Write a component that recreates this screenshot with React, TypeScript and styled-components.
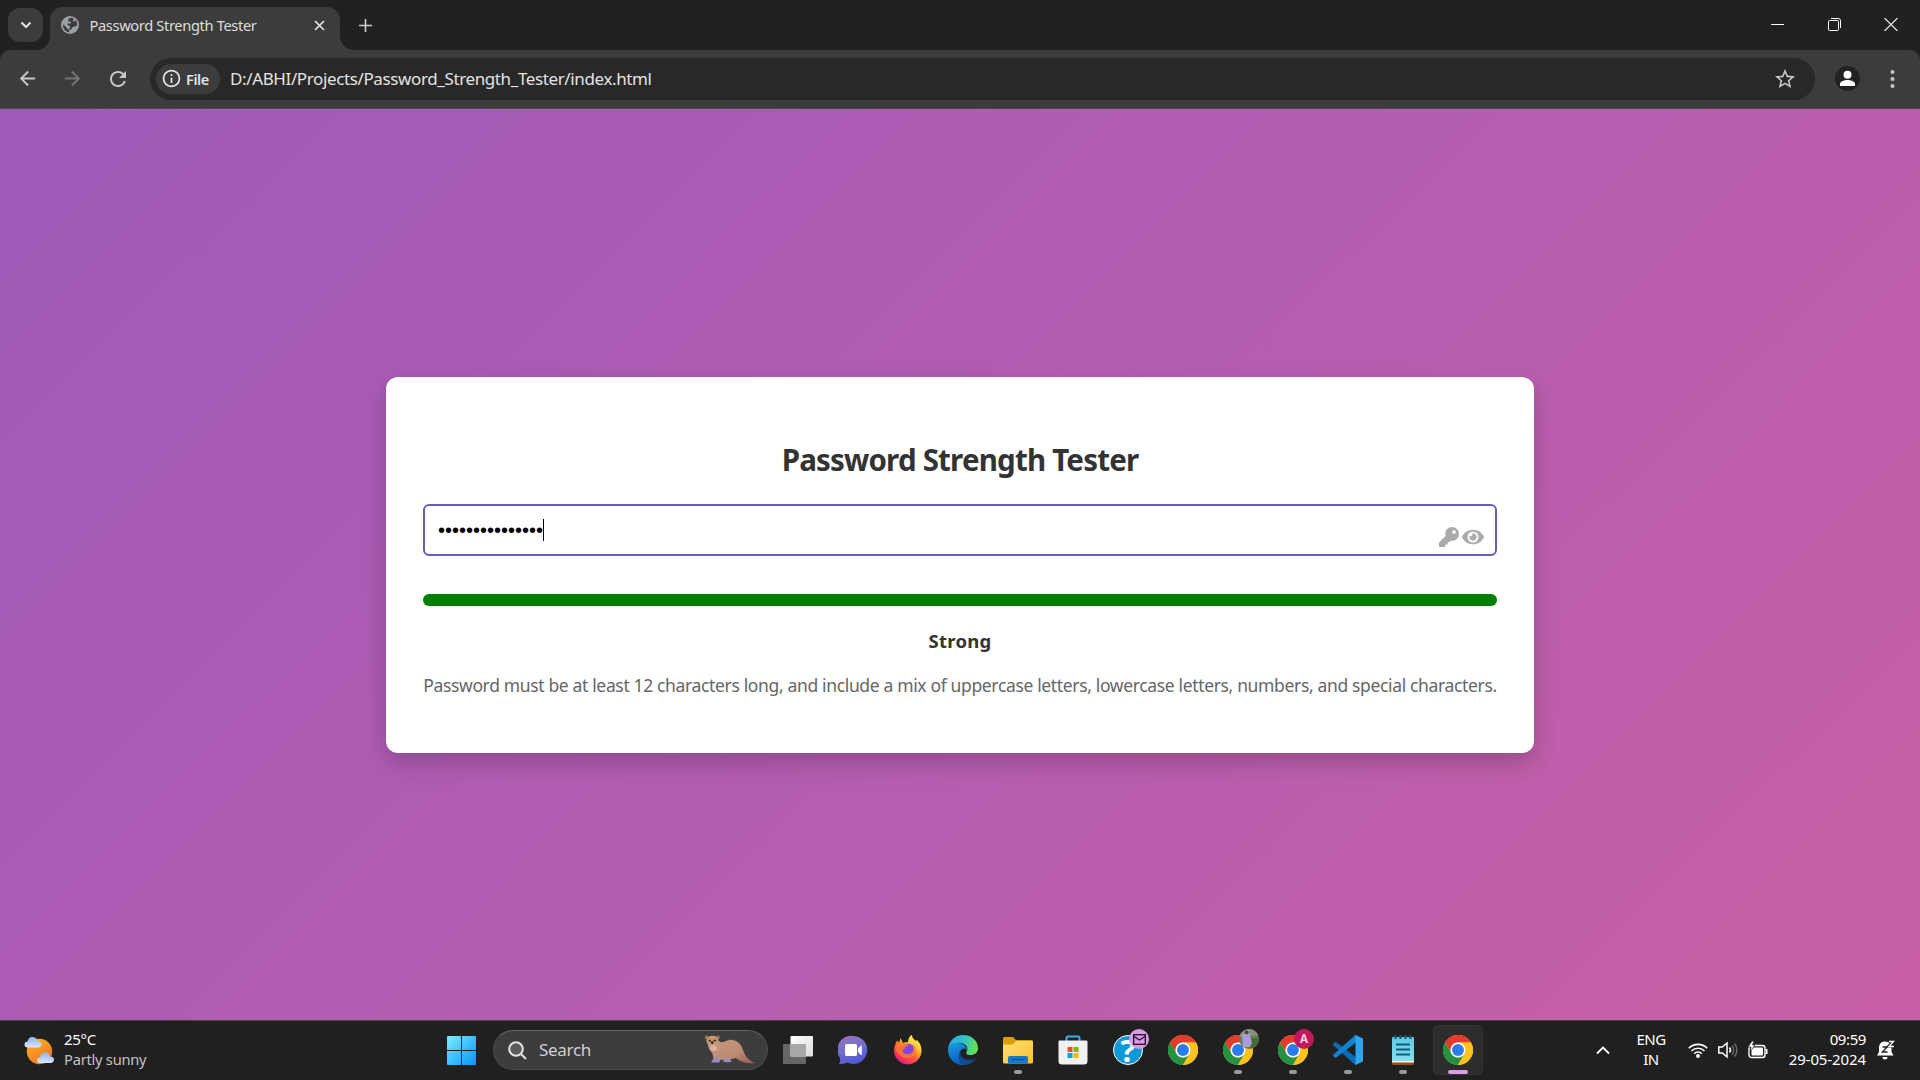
import React from "react";
import styled, { createGlobalStyle, css } from "styled-components";
import { FaKey, FaEye } from "react-icons/fa";
import { MdArrowBack, MdArrowForward, MdRefresh, MdStarBorder, MdInfoOutline } from "react-icons/md";

const Global = createGlobalStyle`
  * { box-sizing: border-box; }
  html, body { margin: 0; padding: 0; overflow: hidden; }
  body { font-family: "Noto Sans", "Open Sans", sans-serif; }
  svg { display: block; flex: none; }
`;

const Screen = styled.div`
  width: 1920px;
  height: 1080px;
  display: flex;
  flex-direction: column;
  overflow: hidden;
  background: #202221;
`;

const Label = styled.span<{ size: number; track?: number; weight?: number; color?: string; line?: number }>`
  white-space: nowrap;
  font-size: ${(p) => p.size}px;
  letter-spacing: ${(p) => p.track ?? 0}px;
  font-weight: ${(p) => p.weight ?? 400};
  color: ${(p) => p.color ?? "#ffffff"};
  line-height: ${(p) => p.line ?? 20}px;
`;

/* ---------- browser ---------- */

const TabStrip = styled.div`
  height: 50px;
  flex: none;
  display: flex;
  align-items: flex-start;
  padding: 7px 0 0 8px;
`;

const TabSearch = styled.div`
  width: 35px;
  height: 34px;
  margin: 1px 7px 0 0;
  border-radius: 12px;
  background: #3c3c3c;
  display: grid;
  place-items: center;
`;

const Tab = styled.div`
  position: relative;
  width: 290px;
  height: 43px;
  padding: 0 15px 7px 11px;
  border-radius: 13px 13px 0 0;
  background: #3c3c3c;
  display: flex;
  align-items: center;
  &::before, &::after {
    content: "";
    position: absolute;
    bottom: 0;
    width: 13px;
    height: 13px;
  }
  &::before { left: -13px; background: radial-gradient(circle at 0 0, transparent 12.5px, #3c3c3c 13px); }
  &::after { right: -13px; background: radial-gradient(circle at 100% 0, transparent 12.5px, #3c3c3c 13px); }
`;

const TabTitle = styled.div`
  flex: 1;
  padding-left: 10.5px;
  display: flex;
`;

const NewTab = styled.div`
  height: 36px;
  margin-left: 19px;
  display: flex;
  align-items: center;
`;

const WindowButtons = styled.div`
  height: 35px;
  margin-left: auto;
  padding-right: 22px;
  display: flex;
  align-items: center;
  gap: 43.5px;
`;

const Toolbar = styled.div`
  height: 59px;
  flex: none;
  display: flex;
  align-items: center;
  padding: 0 22px 1px 16px;
  border-radius: 10px 10px 0 0;
  background: #3c3c3c;
  border-bottom: 1px solid #4a4a4a;
  color: #c7c7c7;
`;

const NavButtons = styled.div`
  display: flex;
  align-items: center;
  width: 134px;
  gap: 22px;
`;

const Omnibox = styled.div`
  width: 1665px;
  height: 42px;
  border-radius: 21px;
  background: #282828;
  padding: 0 18px 0 6px;
  display: flex;
  align-items: center;
`;

const Chip = styled.div`
  width: 64px;
  height: 30px;
  border-radius: 15px;
  background: #3c3c3c;
  color: #e3e3e3;
  padding-left: 5px;
  display: flex;
  align-items: center;
  gap: 4px;
  margin-right: 10px;
`;

const Url = styled.div`
  flex: 1;
  display: flex;
`;

const Avatar = styled.div`
  width: 25px;
  height: 25px;
  margin: 0 auto 0 20px;
`;

/* ---------- web page ---------- */

const Page = styled.main`
  height: 911px;
  flex: none;
  display: flex;
  justify-content: center;
  align-items: center;
  background: linear-gradient(135deg, #9e5ab8, #b55db1 52%, #c960a6);
`;

const Card = styled.section`
  width: 1148px;
  height: 376px;
  margin-top: 1px;
  padding: 63px 37px 0;
  border-radius: 12px;
  background: #ffffff;
  box-shadow: 0 10px 25px rgba(0, 0, 0, 0.2);
  display: flex;
  flex-direction: column;
  align-items: center;
`;

const Field = styled.div`
  width: 100%;
  height: 52px;
  margin: 24px 0 38px;
  padding: 0 11px 0 13px;
  border: 2px solid #6c5cb8;
  border-radius: 6px;
  display: flex;
  align-items: center;
`;

const Dots = styled.span`
  font-family: "Liberation Sans", Arial, sans-serif;
  font-size: 20px;
  line-height: 22px;
  margin-top: -1px;
  color: #000;
`;

const Caret = styled.i`
  width: 1px;
  height: 22px;
  background: #000;
`;

const FieldIcons = styled.div`
  margin: 13px 0 0 auto;
  display: flex;
  align-items: center;
  gap: 3px;
  color: #aaaaaa;
`;

const Meter = styled.div`
  width: 100%;
  height: 12px;
  flex: none;
  border-radius: 6px;
  background: #008000;
`;

const Verdict = styled.div`
  height: 28px;
  margin: 21px 0 17px;
  display: flex;
`;

/* ---------- taskbar ---------- */

const Taskbar = styled.footer`
  height: 60px;
  flex: none;
  display: flex;
  align-items: center;
  padding-bottom: 1px;
  background: #202020;
  border-top: 1px solid #474747;
`;

const Weather = styled.div`
  width: 433px;
  padding-left: 24px;
  display: flex;
  align-items: center;
  gap: 9px;
`;

const Lines = styled.div<{ align?: string; width?: number }>`
  display: flex;
  flex-direction: column;
  align-items: ${(p) => p.align ?? "flex-start"};
  ${(p) => p.width && css`width: ${p.width}px;`}
  padding-bottom: 2px;
`;

const SearchBox = styled.div`
  width: 275px;
  height: 40px;
  border-radius: 20px;
  margin: 0 2.5px 0 4px;
  padding: 0 11px 0 14px;
  background: #3d3d3d;
  border: 1px solid #4b4b4b;
  border-top-color: #646464;
  display: flex;
  align-items: center;
`;

const SearchText = styled.div`
  flex: 1;
  display: flex;
  padding-left: 12px;
`;

const Slot = styled.div<{ wide?: number; active?: boolean }>`
  position: relative;
  width: ${(p) => p.wide ?? 55}px;
  height: 50px;
  display: grid;
  place-items: center;
  ${(p) => p.active && css`
    width: 50px;
    margin: 0 2.5px;
    background: #2d2d2d;
    box-shadow: inset 0 0 0 1px #343434;
    border-radius: 6px;
  `}
`;

const Marker = styled.i<{ active?: boolean }>`
  position: absolute;
  left: 50%;
  bottom: 1px;
  width: ${(p) => (p.active ? 20 : 8)}px;
  height: 4px;
  transform: translateX(-50%);
  border-radius: 2px;
  background: ${(p) => (p.active ? "#dc9be4" : "#9a9a9a")};
`;

const Badge = styled.span<{ bg: string }>`
  position: absolute;
  left: 28.5px;
  top: 4px;
  width: 20px;
  height: 20px;
  border-radius: 50%;
  overflow: hidden;
  background: ${(p) => p.bg};
  display: grid;
  place-items: center;
`;

const Tray = styled.div`
  margin-left: auto;
  padding-right: 25px;
  display: flex;
  align-items: center;
`;

const Gap = styled.span<{ w: number }>`
  width: ${(p) => p.w}px;
`;

const ChromeLogo = () => (
  <svg width="30" height="30" viewBox="0 0 48 48">
    <circle cx="24" cy="24" r="24" fill="#fcc31e" />
    <path d="M3.2 12A24 24 0 0 1 44.8 12H24a12 12 0 0 0-10.4 18Z" fill="#e33b2e" />
    <path d="M3.2 12A24 24 0 0 0 24 48l10.4-18a12 12 0 0 1-20.8 0Z" fill="#229342" />
    <path d="M44.8 12A24 24 0 0 1 24 48l10.4-18A12 12 0 0 0 24 12Z" fill="#fcc31e" />
    <circle cx="24" cy="24" r="12" fill="#fff" />
    <circle cx="24" cy="24" r="9.5" fill="#2a7bee" />
  </svg>
);

const Ferret = () => (
  <svg width="52" height="30" viewBox="0 0 52 30">
    <defs>
      <linearGradient id="fur" x1="0" y1="0" x2="1" y2="1">
        <stop offset="0" stopColor="#c79a7a" /><stop offset=".6" stopColor="#bd8a76" /><stop offset="1" stopColor="#8d5a4c" />
      </linearGradient>
    </defs>
    <path d="M3.500 7C4 12 5 15 8 17.500c1 3 1.500 5 1.500 7L24 25l8-2c4 4 12 6 19 5-6-2-10-7-12-13C37 8 31 4 25 5c-5 1-7 4-10 1Z" fill="url(#fur)" />
    <circle cx="2.800" cy="2.600" r="2" fill="#9f7256" /><circle cx="13.800" cy="2.600" r="2" fill="#9f7256" />
    <ellipse cx="8.300" cy="5.600" rx="6" ry="4.800" fill="#c49a72" />
    <path d="M4.500 4.800h2.600v1.800H4.500ZM9.500 4.800h2.600v1.800H9.500Z" fill="#4b3732" /><circle cx="8.200" cy="7.600" r="1.300" fill="#29191b" />
    <ellipse cx="9.500" cy="13" rx="3.600" ry="3" fill="#d9b1a3" />
    <path d="M9.500 24c3-2 5-2 7-1l-1 4.500H7.500c0-1 0-2 2-3.500ZM20 24l5-1 3 3.500c-2 1-7 1-9 0Z" fill="#9b8cc0" />
  </svg>
);

const PartlySunny = () => (
  <svg width="31" height="29" viewBox="0 0 31 29">
    <defs>
      <linearGradient id="sun" x1="0" y1="0" x2=".6" y2="1"><stop stopColor="#f7ba2c" /><stop offset="1" stopColor="#f2741c" /></linearGradient>
      <linearGradient id="cl" x1="0" y1="0" x2="0" y2="1"><stop stopColor="#8fb2ee" /><stop offset="1" stopColor="#dbe7fc" /></linearGradient>
    </defs>
    <circle cx="15.500" cy="15.500" r="12.700" fill="url(#sun)" />
    <path d="M3.500 11.500a3 3 0 0 1 0-6C4.500 2 6 .5 9 1c3 .2 4 2 4.500 4 2 0 4 1 4 3.200s-1.500 3.300-3.500 3.300Z" fill="url(#cl)" />
    <path d="M15.500 27a2.800 2.800 0 0 1 .5-5.600c.5-3 2.500-5 5.500-5 2.500 0 4 1.500 4.500 4 2.500 0 4 1 4 3s-1.500 3.600-3.500 3.600Z" fill="url(#cl)" />
  </svg>
);

const WindowsLogo = () => (
  <svg width="29" height="29" viewBox="0 0 29 29">
    <defs><linearGradient id="win" gradientUnits="userSpaceOnUse" x1="0" y1="0" x2="29" y2="29"><stop stopColor="#7ceffd" /><stop offset=".5" stopColor="#3dbffb" /><stop offset="1" stopColor="#0c93f8" /></linearGradient></defs>
    <path d="M1 0H14V14H0V1A1 1 0 0 1 1 0ZM15 0H28A1 1 0 0 1 29 1V14H15ZM0 15H14V29H1A1 1 0 0 1 0 28ZM15 15H29V28A1 1 0 0 1 28 29H15Z" fill="url(#win)" />
  </svg>
);

const TaskView = () => (
  <svg width="30" height="28" viewBox="0 0 30 28">
    <defs><linearGradient id="tv" x1="0" y1="0" x2="1" y2="1"><stop stopColor="#fff" /><stop offset="1" stopColor="#dcdcdc" /></linearGradient></defs>
    <rect x="0" y="8" width="23" height="20" rx="1" fill="#666" />
    <rect x="7.500" y="0" width="22.500" height="20.500" rx="1" fill="url(#tv)" />
    <path d="M7.500 8H23v12.500H8.500a1 1 0 0 1-1-1Z" fill="#a8a8a8" />
  </svg>
);

const ChatLogo = () => (
  <svg width="30" height="30" viewBox="0 0 30 30">
    <defs><linearGradient id="chat" x1=".2" y1="0" x2=".5" y2="1"><stop stopColor="#9b72b8" /><stop offset=".5" stopColor="#6f6fd0" /><stop offset="1" stopColor="#5257cf" /></linearGradient></defs>
    <path d="M15.500 1a14 14 0 1 1-6.500 26.500C6 29 3 29.300 1 29c1-1.500 1.500-4 1-6A14 14 0 0 1 15.500 1Z" fill="url(#chat)" />
    <rect x="7" y="9" width="12" height="12" rx="1.500" fill="#fff" /><path d="M20 13.500l3-3h.8v9.500H23l-3-3Z" fill="#fff" />
  </svg>
);

const FirefoxLogo = () => (
  <svg width="30" height="30" viewBox="0 0 30 30">
    <defs>
      <linearGradient id="ff" x1=".8" y1=".1" x2=".25" y2=".95"><stop stopColor="#fff44f" /><stop offset=".3" stopColor="#ffbd2f" /><stop offset=".6" stopColor="#ff5a36" /><stop offset="1" stopColor="#e8187f" /></linearGradient>
    </defs>
    <path d="M1 16C1 11 3 7 4.500 5.500L6 8l1.500-5L10 8c2-1 4-1 5-1 0-3 1.500-6 4-7 0 3 2 4 4 6l1-1c3 3 5 7 4.500 12A13.800 13.800 0 0 1 1 16Z" fill="url(#ff)" />
    <circle cx="15" cy="14.500" r="6" fill="#8144e2" />
    <path d="M2.500 11c3-3 7-3 10-1.500 1 0 3-.5 3.500 0-1 2-3 2-4 3-.5 1.500-1 2.500-3 3 1 3 4 4 7 3.500 4-1 6-5 4-9 5 3 4 10-2 12.500C10 25 2 19 2.500 11Z" fill="#ff7a2c" opacity=".8" />
  </svg>
);

const EdgeLogo = () => (
  <svg width="30" height="30" viewBox="0 0 30 30">
    <defs>
      <linearGradient id="e1" x1="0" y1=".3" x2="1" y2=".5"><stop stopColor="#26a8e8" /><stop offset=".5" stopColor="#2fc2c9" /><stop offset="1" stopColor="#69e04c" /></linearGradient>
      <linearGradient id="e2" x1="0" y1="0" x2=".3" y2="1"><stop stopColor="#1a9be4" /><stop offset="1" stopColor="#0b5fbd" /></linearGradient>
    </defs>
    <path d="M15 30C6 30 0 23 0 15c0-4 5-8 10-7 5 0 8 3 9 7-2-2-4-2-6 0-4 5-1 12 6 13-1 1-2 2-4 2Z" fill="url(#e2)" />
    <path d="M0 14C1 6 7 0 15 0c9 0 15 6 15 13 0 5-4 7-7 7-4 0-6-1-4-4C21 10 14 7 9 8c-5 0-8 3-9 6Z" fill="url(#e1)" />
    <path d="M12.500 16c-1 5 3 9 9 9 3 0 5-1 6.500-2-2 4-7 7-12 7-6-2-7-10-3.500-14Z" fill="#0f4a94" />
  </svg>
);

const FolderLogo = () => (
  <svg width="30" height="28" viewBox="0 0 30 28">
    <defs><linearGradient id="fo" x1="0" y1="0" x2="1" y2="1"><stop stopColor="#ffe07a" /><stop offset="1" stopColor="#fabf2a" /></linearGradient></defs>
    <path d="M0 2.500A1.500 1.500 0 0 1 1.500 1H10l3 3h15a2 2 0 0 1 2 2v4H0Z" fill="#dc9d0b" />
    <path d="M0 8.500h9.500L13 5h16a1 1 0 0 1 1 1v20a1.500 1.500 0 0 1-1.500 1.500h-27A1.500 1.500 0 0 1 0 26Z" fill="url(#fo)" />
    <path d="M5 27.500V22a2 2 0 0 1 2-2h16a2 2 0 0 1 2 2v5.500Z" fill="#1479c9" /><rect x="8.500" y="23" width="13" height="1.200" fill="#0a4f8c" />
  </svg>
);

const StoreLogo = () => (
  <svg width="30" height="30" viewBox="0 0 30 30">
    <path d="M8.500 6V3A1.500 1.500 0 0 1 10 1.500h10A1.500 1.500 0 0 1 21.500 3v3" fill="none" stroke="#2fb3ea" strokeWidth="2" />
    <path d="M1.500 5.500h27a1 1 0 0 1 1 1V26a3.500 3.500 0 0 1-3.500 3.500H4A3.500 3.500 0 0 1 .5 26V6.500a1 1 0 0 1 1-1Z" fill="#f1f1f1" />
    <path d="M9.500 12h5v5h-5Z" fill="#f25022" /><path d="M15.500 12h5v5h-5Z" fill="#7fba00" /><path d="M9.500 18h5v5h-5Z" fill="#00a4ef" /><path d="M15.500 18h5v5h-5Z" fill="#ffb900" />
  </svg>
);

const HelpDisc = styled.div`
  width: 30px;
  height: 30px;
  border-radius: 50%;
  border: 1.500px solid #fff;
  background: #0f9ad6;
  display: grid;
  place-items: center;
`;

const CodeLogo = () => (
  <svg width="30" height="30" viewBox="0 0 30 30">
    <path d="M.5 11.700 1.700 10.500a1.300 1.300 0 0 1 1.600 0L23 25.500V29L21.500 29.500.5 13.500a1.300 1.300 0 0 1 0-1.800Z" transform="translate(0 -3)" fill="#0b6cb5" />
    <path d="M.5 8.700 1.700 7.500a1.300 1.300 0 0 1 1.600 0L23 22.500V29l-1.500.3L.5 10.500a1.300 1.300 0 0 1 0-1.800Z" fill="#0b6cb5" />
    <path d="M.5 21.300 1.700 22.500a1.300 1.300 0 0 0 1.600 0L23 7.500V1L21.500.7.5 19.500a1.300 1.300 0 0 0 0 1.800Z" fill="#1283d0" />
    <path d="M21 29.500c.8.500 1.500.5 2 .3l6-2.800a1.500 1.500 0 0 0 1-1.500V4.500A1.500 1.500 0 0 0 29 3L23 .2C22 0 21.500.1 21 .6c.8-.5 1.500 0 1.500 1v26.800c0 1-.8 1.500-1.500 1.100Z" fill="#2ba5f0" />
  </svg>
);

const NotepadLogo = () => (
  <svg width="22" height="30" viewBox="0 0 22 30">
    <defs><linearGradient id="np" x1="0" y1="0" x2="0" y2="1"><stop stopColor="#5fc9e2" /><stop offset="1" stopColor="#86def0" /></linearGradient></defs>
    <rect y="24" width="22" height="6" rx="1" fill="#9c4f14" /><rect y="23" width="22" height="4.500" fill="#f3f3f3" />
    <rect y="2" width="22" height="24" rx="1" fill="url(#np)" />
    <path d="M3.500 0v4M8.500 0v4M13.500 0v4M18.500 0v4" stroke="#135a73" strokeWidth="2.200" />
    <path d="M4 9.500h14M4 14.500h14M4 19.500h14" stroke="#0f5e78" strokeWidth="1.800" />
  </svg>
);

export default function App() {
  return (
    <Screen>
      <Global />
      <TabStrip>
        <TabSearch>
          <svg width="12" height="8" viewBox="0 0 12 8"><path d="M1.500 1.500 6 6l4.500-4.500" fill="none" stroke="#e3e3e3" strokeWidth="2" /></svg>
        </TabSearch>
        <Tab>
          <svg width="18" height="18" viewBox="0 0 18 18">
            <circle cx="9" cy="9" r="9" fill="#9aa0a6" />
            <path d="M10.500 1.800c-2 0-3.300 1-3.300 2.700 0 1 1 1 2.300 1.200 1 .3.500 1.800-.5 1.800H7c-1 .8-.5 1.800.7 2 1.500.2 1.800 1.300 1 2.300-.5.700-.7 1.200-.7 2C7 13.500 5.500 12 4.500 10.300L2 8.500c-.3 4 2.500 7.300 6.200 7.700v-2.500l2.300-.4 1-2.300 2.300-.5c1 0 1.300-1 2.300-1 .3-2-.3-4-1.500-5.200l-1.300 1.200-1.500-.5c0-1.500 1-1.500 1.700-1.700a7 7 0 0 0-3-1.500Z" fill="#3c3c3c" />
          </svg>
          <TabTitle><Label size={14.7} track={-0.38} color="#dddddd">Password Strength Tester</Label></TabTitle>
          <svg width="11" height="11" viewBox="0 0 11 11"><path d="m1 1 9 9M10 1 1 10" stroke="#e3e3e3" strokeWidth="1.700" /></svg>
        </Tab>
        <NewTab><svg width="13" height="13" viewBox="0 0 13 13"><path d="M6.500 0v13M0 6.500h13" stroke="#d0d0d0" strokeWidth="1.600" /></svg></NewTab>
        <WindowButtons>
          <svg width="13" height="13" viewBox="0 0 13 13"><path d="M0 6.500h13" stroke="#fff" /></svg>
          <svg width="13" height="13" viewBox="0 0 13 13" fill="none" stroke="#fff"><rect x=".5" y="2.500" width="10" height="10" rx="1" /><path d="M3 .5h7.500a2 2 0 0 1 2 2V10" /></svg>
          <svg width="14" height="13" viewBox="0 0 14 13"><path d="m.5 0 13 13M13.500 0l-13 13" stroke="#e6e6e6" strokeWidth="1.200" /></svg>
        </WindowButtons>
      </TabStrip>
      <Toolbar>
        <NavButtons>
          <MdArrowBack size={23} />
          <MdArrowForward size={23} color="#757575" />
          <MdRefresh size={24} />
        </NavButtons>
        <Omnibox>
          <Chip><MdInfoOutline size={21} /><Label size={14.5} track={-0.4} weight={600} color="#e3e3e3">File</Label></Chip>
          <Url><Label size={17} track={-0.38} color="#e3e3e3" line={24}>D:/ABHI/Projects/Password_Strength_Tester/index.html</Label></Url>
          <MdStarBorder size={24} />
        </Omnibox>
        <Avatar>
          <svg width="25" height="25" viewBox="0 0 25 25"><circle cx="12.500" cy="12.500" r="12.500" fill="#202221" /><circle cx="12.500" cy="8.700" r="4" fill="#fff" /><path d="M5 20v-2c0-3 5-4 7.500-4s7.500 1 7.500 4v2Z" fill="#fff" /></svg>
        </Avatar>
        <svg width="11" height="20" viewBox="0 0 11 20" fill="#c7c7c7"><circle cx="5.500" cy="3" r="2" /><circle cx="5.500" cy="10" r="2" /><circle cx="5.500" cy="17" r="2" /></svg>
      </Toolbar>

      <Page>
        <Card>
          <Label size={29.5} track={-0.8} weight={700} color="#333333" line={40}>Password Strength Tester</Label>
          <Field>
            <Dots>•••••••••••••••</Dots><Caret />
            <FieldIcons><FaKey size={20} /><FaEye size={22} /></FieldIcons>
          </Field>
          <Meter />
          <Verdict><Label size={18.5} track={0.25} weight={700} color="#333333" line={28}>Strong</Label></Verdict>
          <Label size={17.5} track={-0.35} color="#666666" line={26}>Password must be at least 12 characters long, and include a mix of uppercase letters, lowercase letters, numbers, and special characters.</Label>
        </Card>
      </Page>

      <Taskbar>
        <Weather>
          <PartlySunny />
          <Lines><Label size={15} track={-0.3}>25°C</Label><Label size={14.7} track={-0.25} color="#c3c3c3">Partly sunny</Label></Lines>
        </Weather>
        <Slot wide={56}><WindowsLogo /></Slot>
        <SearchBox>
          <svg width="19" height="19" viewBox="0 0 19 19" fill="#5a5a5a" stroke="#e4e4e4" strokeWidth="2"><circle cx="8" cy="8" r="6.800" /><path d="m13 13 5 5" /></svg>
          <SearchText><Label size={17} track={-0.3} color="#d0d0d0" line={24}>Search</Label></SearchText>
          <Ferret />
        </SearchBox>
        <Slot><TaskView /></Slot>
        <Slot><ChatLogo /></Slot>
        <Slot><FirefoxLogo /></Slot>
        <Slot><EdgeLogo /></Slot>
        <Slot><FolderLogo /><Marker /></Slot>
        <Slot><StoreLogo /></Slot>
        <Slot><HelpDisc><Label size={31} weight={700} line={26}>?</Label></HelpDisc>
          <Badge bg="#dc9be4"><svg width="13" height="11" viewBox="0 0 13 11" fill="none" stroke="#1c1020" strokeWidth="1.300"><rect x=".7" y=".7" width="11.600" height="9.600" /><path d="m1 2.500 5.500 3.500L12 2.500" /></svg></Badge>
        </Slot>
        <Slot><ChromeLogo /></Slot>
        <Slot><ChromeLogo /><Badge bg="#6c7a62"><svg width="20" height="20" viewBox="0 0 20 20"><path d="M0 0h20v6L0 8Z" fill="#87917f" /><path d="M12 9h8v11h-9Z" fill="#486b35" /><path d="M3 6c2-3 6-3 8 0l2 8-2 4H4Z" fill="#a99bd4" /><circle cx="7.500" cy="3.500" r="2" fill="#59453f" /></svg></Badge><Marker /></Slot>
        <Slot><ChromeLogo /><Badge bg="#c2185b"><Label size={11.5} weight={700} color="#f5d5e2" line={20}>A</Label></Badge><Marker /></Slot>
        <Slot><CodeLogo /><Marker /></Slot>
        <Slot><NotepadLogo /><Marker /></Slot>
        <Slot active><ChromeLogo /><Marker active /></Slot>
        <Tray>
          <svg width="14" height="9" viewBox="0 0 14 9"><path d="m1 7.500 6-6 6 6" fill="none" stroke="#fff" strokeWidth="1.800" /></svg>
          <Gap w={26} />
          <Lines align="center" width={30}><Label size={15} track={-0.5}>ENG</Label><Label size={15} track={-0.5}>IN</Label></Lines>
          <Gap w={22} />
          <svg width="20" height="16" viewBox="0 0 20 16" fill="none" stroke="#fff" strokeWidth="1.600"><path d="M.8 6.200a13 13 0 0 1 18.400 0M3.500 9a9.200 9.200 0 0 1 13 0M6.200 11.600a5.400 5.400 0 0 1 7.600 0" /><circle cx="10" cy="14" r="1.200" fill="#fff" /></svg>
          <Gap w={10} />
          <svg width="20" height="18" viewBox="0 0 20 18" fill="none" stroke="#fff" strokeWidth="1.500"><path d="M.8 6h3.500L9 2v14l-4.700-4H.8ZM11.500 6.500a4 4 0 0 1 0 5" /><path d="M14 4.500a7 7 0 0 1 0 9M16.500 2.500a10 10 0 0 1 0 13" stroke="#6a6a6a" /></svg>
          <Gap w={10} />
          <svg width="20" height="18" viewBox="0 0 20 18"><rect x="1" y="4.500" width="16" height="12" rx="2.500" fill="none" stroke="#fff" strokeWidth="1.400" /><rect x="3.500" y="6.500" width="11.500" height="8" rx="1" fill="#fff" /><path d="M18 8h1.500v5H18Z" fill="#fff" /><path d="M4 0 0 6h3l-1 5 5-7H4.500L6 0Z" fill="#fff" stroke="#202020" strokeWidth=".7" /></svg>
          <Gap w={20} />
          <Lines align="flex-end" width={78}><Label size={15} track={-0.4}>09:59</Label><Label size={15} track={-0.1}>29-05-2024</Label></Lines>
          <Gap w={11} />
          <svg width="18" height="20" viewBox="0 0 18 20"><path d="M8 1.500c4 0 6.500 3 6.500 6.500v4l2 3.500H0L2 12V8c0-4 2-6.500 6-6.500ZM5.500 17h5a2.500 2.500 0 0 1-5 0Z" fill="#fff" /><path d="M5.500 7h4.500L5.500 12h5" fill="none" stroke="#202020" strokeWidth="1.400" /><path d="M12 1.500h4.500L12 6h5" fill="none" stroke="#202020" strokeWidth="3" /><path d="M12 1.500h4.500L12 6.500h5" fill="none" stroke="#fff" strokeWidth="1.300" /></svg>
        </Tray>
      </Taskbar>
    </Screen>
  );
}
